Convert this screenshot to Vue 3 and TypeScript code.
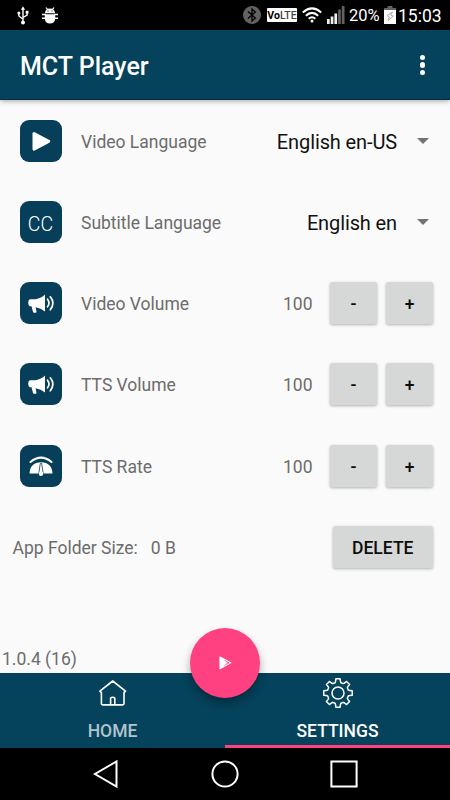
<script setup lang="ts">
import { reactive } from 'vue'

interface LanguageRow {
  icon: 'play' | 'cc'
  label: string
  value: string
}
interface LevelRow {
  icon: 'horn' | 'gauge'
  label: string
  value: number
}

const languages: LanguageRow[] = [
  { icon: 'play', label: 'Video Language', value: 'English en-US' },
  { icon: 'cc', label: 'Subtitle Language', value: 'English en' },
]

const levels = reactive<LevelRow[]>([
  { icon: 'horn', label: 'Video Volume', value: 100 },
  { icon: 'horn', label: 'TTS Volume', value: 100 },
  { icon: 'gauge', label: 'TTS Rate', value: 100 },
])

// Outline of an eight-toothed cog, centred on 0,0
function cogPath(): string {
  const profile: [number, number][] = [
    [-16, 10.7],
    [-11.5, 12],
    [-8.5, 14.4],
    [8.5, 14.4],
    [11.5, 12],
    [16, 10.7],
  ]
  const points: string[] = []
  for (let tooth = 0; tooth < 8; tooth++) {
    for (const [offset, radius] of profile) {
      const a = ((tooth * 45 + offset) * Math.PI) / 180
      points.push(`${(Math.cos(a) * radius).toFixed(2)} ${(Math.sin(a) * radius).toFixed(2)}`)
    }
  }
  return `M${points.join('L')}Z`
}
const cog = cogPath()
</script>

<template>
  <div class="phone">
    <header class="status">
      <svg class="usb" viewBox="0 0 12 19" width="12" height="19">
        <g fill="none" stroke="#fff" stroke-width="1.4">
          <path d="M6 3V16M1.900 7.500V10L6 13.200M10.100 6.500V9L6 11.500" />
        </g>
        <g fill="#fff">
          <path d="M3.900 3.800L6 .3L8.100 3.800Z" />
          <circle cx="6" cy="16.500" r="2" />
          <circle cx="1.900" cy="7" r="1.500" />
          <path d="M8.700 4.800h2.800v2.800h-2.800z" />
        </g>
      </svg>
      <svg class="bug" viewBox="0 0 16 17" width="16" height="17">
        <path fill="#fff" d="M3 6.300C3 4.500 3.700 3.300 4.800 2.400L3.500.8L4.300.2L5.800 1.800Q8 1.100 10.200 1.800L11.700.2L12.500.8L11.200 2.400C12.300 3.300 13 4.500 13 6.300ZM2.800 7.300H13.200V12Q12.500 16.500 8 16.500Q3.500 16.500 2.800 12Z" />
        <path d="M0 7.600H4M12 7.600H16M0 11.300H4M12 11.300H16" stroke="#fff" stroke-width="1.500" />
        <path d="M5.500 3.500h1v1h-1zM9.500 3.500h1v1h-1z" fill="#000" />
      </svg>
      <span class="spacer"></span>
      <svg class="bluetooth" viewBox="0 0 18 18" width="18" height="18">
        <circle cx="9" cy="9" r="9" fill="#626262" />
        <path d="M5 5.500L12.400 12L9 15V3L12.400 6L5 12.500" fill="none" stroke="#000" stroke-width="1.300" />
      </svg>
      <span class="volte"><b>Vo</b>LTE</span>
      <svg class="wifi" viewBox="0 0 20 16" width="20" height="16">
        <g fill="none" stroke="#fff" stroke-width="2">
          <path d="M.8 5.400Q10-2.600 19.200 5.400" />
          <path d="M3.800 8.700Q10 3.100 16.200 8.700" />
          <path d="M6.700 11.700Q10 8.800 13.300 11.700" />
        </g>
        <circle cx="10" cy="14" r="1.500" fill="#fff" />
      </svg>
      <svg class="signal" viewBox="0 0 18 18" width="18" height="18">
        <path d="M0 13h2.700v5H0zM3.700 10.500h2.700V18H3.700zM7.400 7.500h2.700V18H7.400z" fill="#eee" />
        <path d="M11.100 3.500h2.700V18h-2.700zM14.800 0h2.700v18h-2.700z" fill="#626262" />
      </svg>
      <span class="percent">20%</span>
      <svg class="battery" viewBox="0 0 12 18" width="12" height="18">
        <path d="M3.500 0h5v2H12v3H0V2h3.500z" fill="#626262" />
        <path d="M0 4h12v14H0z" fill="#fff" />
        <path d="M8.500 6L3 9.500L5.500 11L4 14.500L9.300 10L6.700 9.200Z" fill="none" stroke="#999" stroke-width=".8" />
      </svg>
      <span class="clock">15:03</span>
    </header>

    <div class="toolbar">
      <h1>MCT Player</h1>
      <button class="more" aria-label="More options"><i></i><i></i><i></i></button>
    </div>

    <main>
      <section v-for="row in languages" :key="row.label" class="row">
        <span class="tile">
          <svg v-if="row.icon === 'play'" viewBox="0 0 42 42" width="42" height="42">
            <path d="M14 13.500L28.700 21.300L14 29.100Z" fill="#fff" stroke="#fff" stroke-width="3" stroke-linejoin="round" />
          </svg>
          <span v-else class="cc">CC</span>
        </span>
        <span class="label">{{ row.label }}</span>
        <span class="choice">{{ row.value }}</span>
        <span class="arrow"></span>
      </section>

      <section v-for="row in levels" :key="row.label" class="row">
        <span class="tile">
          <svg v-if="row.icon === 'horn'" viewBox="0 0 42 42" width="42" height="42">
            <path fill="#fff" d="M9.800 17.200H15.500Q21.500 16.300 25 12.500V29.500Q21 26 15.600 25.300L16.600 30.200Q14.500 31.300 13.100 30.200L11.500 24.300H9.800Q8.200 23.200 8.200 20.700Q8.200 18 9.800 17.200Z" />
            <g fill="none" stroke="#fff" stroke-width="1.700" stroke-linecap="round">
              <path d="M27.500 17.200Q30.500 21 27.500 24.800" />
              <path d="M30.300 14.800Q35.500 21 30.300 27.800" />
            </g>
          </svg>
          <svg v-else viewBox="0 0 42 42" width="42" height="42">
            <path d="M10.500 17Q21 8.300 31.500 17" fill="none" stroke="#fff" stroke-width="2.100" stroke-linecap="round" />
            <path d="M9.500 28.600Q10 17.500 21 17.200Q32 17.500 32.500 28.600Z" fill="#fff" />
            <path d="M20.300 18.300L18.800 28.600Q21 32 23.200 28.600L21.700 18.300Z" fill="#fff" stroke="#073f5a" stroke-width=".8" />
            <circle cx="21" cy="28.800" r="2.200" fill="#fff" />
          </svg>
        </span>
        <span class="label">{{ row.label }}</span>
        <span class="amount">{{ row.value }}</span>
        <button class="btn step" @click="row.value--">-</button>
        <button class="btn step" @click="row.value++">+</button>
      </section>

      <section class="row storage">
        <span class="folder">App Folder Size:</span>
        <span class="size">0 B</span>
        <button class="btn delete">DELETE</button>
      </section>

      <p class="version">1.0.4 (16)</p>
    </main>

    <nav class="tabs">
      <button class="tab">
        <svg viewBox="0 0 28 28" width="28" height="28">
          <g fill="none" stroke="#fff" stroke-width="1.600" stroke-linejoin="round" stroke-linecap="round">
            <path d="M.9 11.200L13.700 1L26.500 11.200L25.500 12.300H25V23.600Q25 24.900 23.700 24.900H3.700Q2.400 24.900 2.400 23.600V12.300H1.900Z" />
            <path d="M11.600 24.600V18.600Q11.600 17.200 13.700 17.200Q15.800 17.200 15.800 18.600V24.600" />
          </g>
        </svg>
        <span>HOME</span>
      </button>
      <button class="tab active">
        <svg viewBox="-16 -16 32 32" width="32" height="32">
          <g fill="none" stroke="#fff" stroke-width="1.500" stroke-linejoin="round">
            <path :d="cog" />
            <circle r="6" />
          </g>
        </svg>
        <span>SETTINGS</span>
      </button>
      <button class="fab" aria-label="Play">
        <svg viewBox="0 0 14 16" width="14" height="16">
          <path d="M2 2L12.700 7.800L2 13.600Z" fill="#fff" stroke="#fff" stroke-width="1.200" stroke-linejoin="round" />
          <path d="M6.800 5L9.600 7.800L6.800 10.600M9.300 6.500L11 7.800L9.300 9.100" fill="none" stroke="#ff4081" stroke-width=".9" />
        </svg>
      </button>
    </nav>

    <footer class="system">
      <svg viewBox="0 0 28 30" width="28" height="30">
        <path d="M24.500 2.500V27.500L3 15Z" fill="none" stroke="#fff" stroke-width="2" />
      </svg>
      <svg viewBox="0 0 28 30" width="28" height="30">
        <circle cx="14" cy="15" r="12.600" fill="none" stroke="#fff" stroke-width="2" />
      </svg>
      <svg viewBox="0 0 28 30" width="28" height="30">
        <path d="M1.400 2.400H26.600V27.600H1.400Z" fill="none" stroke="#fff" stroke-width="2" />
      </svg>
    </footer>
  </div>
</template>

<style>
body {
  margin: 0;
}
</style>

<style scoped>
.phone {
  width: 450px;
  height: 800px;
  display: flex;
  flex-direction: column;
  overflow: hidden;
  background: #fafafa;
  font-family: Roboto, 'Liberation Sans', sans-serif;
  color: #6c6c6c;
}
button {
  border: 0;
  padding: 0;
  font-family: inherit;
}
svg {
  display: block;
  flex: none;
}
.status {
  height: 30px;
  flex: none;
  box-sizing: border-box;
  padding: 0 9px 0 16.500px;
  display: flex;
  align-items: center;
  background: #000;
  color: #fff;
}
.bug {
  margin-left: 13px;
}
.spacer {
  flex: 1;
}
.volte {
  margin-left: 6px;
  width: 30px;
  height: 14px;
  border-radius: 1px;
  background: #fff;
  color: #444;
  font-size: 10.500px;
  font-weight: 500;
  line-height: 15px;
  text-align: center;
}
.volte b {
  color: #000;
}
.wifi {
  margin-left: 5px;
}
.signal {
  margin-left: 5px;
}
.percent {
  margin-left: 4px;
  width: 32px;
  font-size: 16.500px;
  line-height: 30px;
  white-space: nowrap;
  padding-top: 1px;
}
.battery {
  margin-left: 3px;
}
.clock {
  margin-left: 2px;
  width: 43px;
  font-size: 17.500px;
  line-height: 30px;
  white-space: nowrap;
  padding-top: 1px;
}
.toolbar {
  height: 70px;
  flex: none;
  box-sizing: border-box;
  padding: 0 17px 0 20px;
  display: flex;
  align-items: center;
  justify-content: space-between;
  background: #05425b;
  border-bottom: 1px solid #092a4c;
  box-shadow: 0 1px 5px rgba(0, 0, 0, 0.35);
  z-index: 1;
}
h1 {
  margin: 4px 0 0;
  font-size: 25px;
  font-weight: 500;
  line-height: 30px;
  color: #fff;
}
.more {
  width: 21px;
  display: flex;
  flex-direction: column;
  align-items: center;
  gap: 2.200px;
  background: none;
  padding-top: 1px;
}
.more i {
  width: 5.400px;
  height: 5.400px;
  border-radius: 50%;
  background: #fff;
}
main {
  flex: 1;
  display: flex;
  flex-direction: column;
}
.row {
  height: 81.250px;
  flex: none;
  box-sizing: border-box;
  padding: 0 17px 0 19.500px;
  display: flex;
  align-items: center;
  font-size: 17.500px;
}
.tile {
  width: 42px;
  height: 42px;
  flex: none;
  border-radius: 9px;
  background: #073f5a;
}
.cc {
  display: block;
  padding-top: 3px;
  color: #fff;
  font-size: 19.500px;
  font-weight: 300;
  line-height: 42px;
  text-align: center;
}
.label {
  flex: 1;
  margin-left: 19.500px;
  padding-top: 2px;
}
.choice {
  font-size: 20px;
  letter-spacing: -0.120px;
  color: #111;
  padding-top: 2px;
}
.arrow {
  margin: 1px 4.500px 0 19.500px;
  border: 6px solid transparent;
  border-top: 6px solid #737373;
  border-bottom: 0;
}
.amount {
  margin-right: 17.500px;
  padding-top: 2px;
}
.btn {
  height: 42px;
  border-radius: 2.500px;
  background: #d6d8d7;
  box-shadow: 0 1px 3px rgba(0, 0, 0, 0.3);
  color: #0c0c0c;
  font-size: 17.500px;
  font-weight: 500;
  line-height: 44px;
}
.step {
  width: 47px;
}
.step + .step {
  margin-left: 9px;
}
.storage {
  padding-left: 12.500px;
}
.folder {
  padding-top: 2px;
}
.size {
  flex: 1;
  margin-left: 13px;
  padding-top: 2px;
}
.delete {
  width: 100.500px;
}
.version {
  margin: auto 0 3px 2px;
  font-size: 17.500px;
  line-height: 21px;
}
.tabs {
  position: relative;
  height: 75px;
  flex: none;
  display: flex;
  background: #05425b;
}
.tab {
  flex: 1;
  box-sizing: border-box;
  display: flex;
  flex-direction: column;
  align-items: center;
  justify-content: space-between;
  padding: 7px 0 7px;
  background: none;
  color: #b0c4cd;
  font-size: 17.500px;
  font-weight: 500;
  line-height: 20px;
}
.tab.active {
  padding: 4px 0 4px;
  border-bottom: 3px solid #ff4081;
  color: #fff;
}
.fab {
  position: absolute;
  left: 190px;
  top: -45px;
  width: 70px;
  height: 70px;
  border-radius: 50%;
  display: flex;
  align-items: center;
  justify-content: center;
  background: #ff4081;
  box-shadow: 0 5px 9px rgba(0, 0, 0, 0.32);
}
.system {
  height: 52px;
  flex: none;
  box-sizing: border-box;
  padding: 0 92px;
  display: flex;
  align-items: center;
  justify-content: space-between;
  background: #000;
}
</style>
